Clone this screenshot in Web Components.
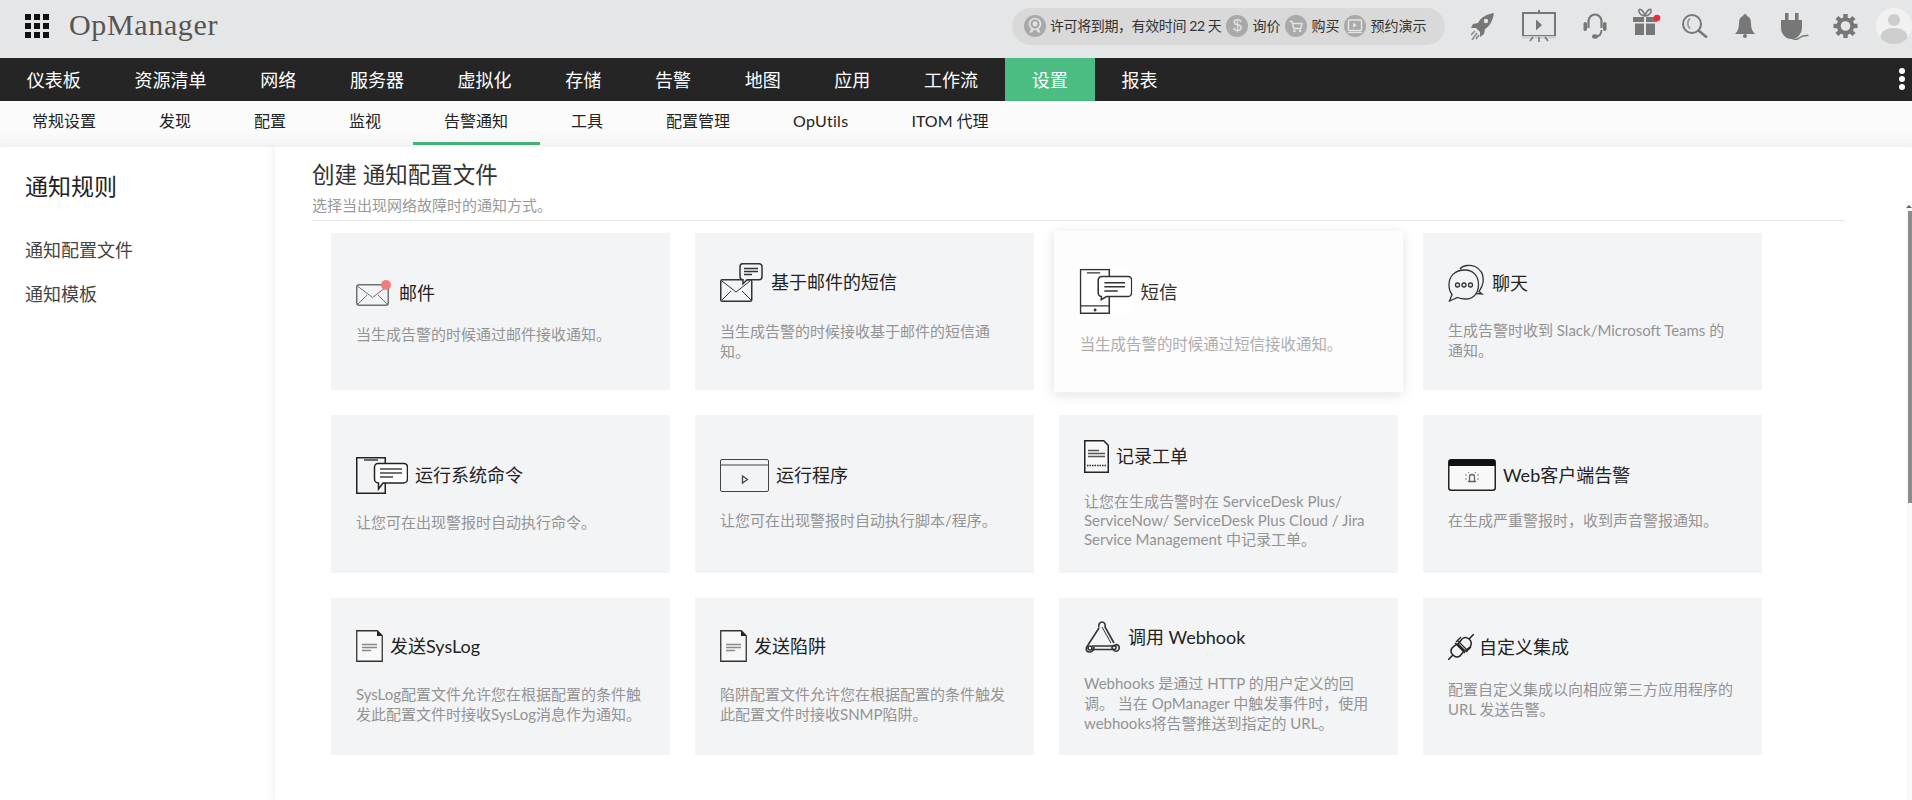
<!DOCTYPE html>
<html lang="zh">
<head>
<meta charset="utf-8">
<title>OpManager</title>
<style>
html,body{margin:0;padding:0;height:800px;overflow:hidden;background:#fff;font-family:Lato,"Noto Sans CJK SC",sans-serif}
svg{display:block;flex:none}
</style>
</head>
<body>
<om-app>
  <om-header slot="header">
    <span slot="logo">OpManager</span>
    <om-pill-item style="letter-spacing:-.4px"><svg slot="icon" viewBox="0 0 22 22" width="22" height="22"><circle cx="11" cy="11" r="11" fill="#a9a9a9"/><circle cx="11" cy="9" r="5.5" fill="none" stroke="#e4e4e4" stroke-width="1.6"/><circle cx="11" cy="9" r="2.4" fill="#e4e4e4"/><path d="M7 14l-1.5 4 3-1 1-2M15 14l1.500 4-3-1-1-2" fill="#e4e4e4"/></svg>许可将到期，有效时间 22 天</om-pill-item>
    <om-pill-item><span slot="icon" class="dollar" style="display:block;width:22px;height:22px;border-radius:50%;background:#a9a9a9;color:#e4e4e4;font:16px/22px 'Liberation Sans',sans-serif;text-align:center">$</span>询价</om-pill-item>
    <om-pill-item><svg slot="icon" viewBox="0 0 22 22" width="22" height="22"><circle cx="11" cy="11" r="11" fill="#a9a9a9"/><path d="M4.500 6.500h2.500l1.800 7h7l1.300-5H7.500" fill="none" stroke="#e4e4e4" stroke-width="1.500"/><circle cx="9.500" cy="16" r="1.300" fill="#e4e4e4"/><circle cx="15" cy="16" r="1.300" fill="#e4e4e4"/></svg>购买</om-pill-item>
    <om-pill-item><svg slot="icon" viewBox="0 0 22 22" width="22" height="22"><circle cx="11" cy="11" r="11" fill="#a9a9a9"/><rect x="4.500" y="5" width="13" height="10.500" rx="1" fill="none" stroke="#e4e4e4" stroke-width="1.500"/><path d="M9 7.800l4 2.400-4 2.400z" fill="#e4e4e4"/><path d="M4 17.500h14" stroke="#e4e4e4" stroke-width="1.300"/></svg>预约演示</om-pill-item>

    <svg slot="tools" style="margin-left:25px" viewBox="0 0 24 27" width="24" height="27" fill="#777"><path d="M24 0C17 1 11 4 8 10L3 11 1 15h5l4 4v5l4-3 1-5c5-3 8-9 9-16z"/><circle cx="16" cy="8" r="2.200" fill="#e4e5e6"/><path d="M5 18l-4 4M7 20l-5 7M9 22l-3 4" stroke="#888" stroke-width="1.500"/></svg>
    <svg slot="tools" style="margin-left:28px" viewBox="0 0 34 32" width="34" height="32"><path d="M17 0v3" stroke="#777" stroke-width="2"/><rect x="1" y="3" width="32" height="23" fill="none" stroke="#777" stroke-width="2"/><path d="M14 9.500l6 5.500-6 5.500z" fill="#777"/><rect x="0" y="26" width="34" height="2.500" fill="#cfcfcf"/><path d="M17 27v5M11 27l-3 4M23 27l3 4" stroke="#777" stroke-width="1.600"/></svg>
    <svg slot="tools" style="margin-left:27px" viewBox="0 0 24 26" width="24" height="26" fill="none" stroke="#777"><path d="M5.500 15V8a6.500 6.500 0 0 1 13 0v7" stroke-width="2.200"/><rect x="0.500" y="9" width="3.500" height="9" rx="1.700" fill="#777" stroke="none"/><rect x="20" y="9" width="3.500" height="9" rx="1.700" fill="#777" stroke="none"/><path d="M18.500 17c0 4-2.500 6.500-6.500 6.500" stroke-width="1.800"/><ellipse cx="12" cy="23.500" rx="3" ry="2.200" fill="#777" stroke="none"/></svg>
    <svg slot="tools" style="margin-left:26px;margin-bottom:10px" viewBox="0 0 28 27" width="28" height="27"><path d="M12 8C8 8 5 4 6 2s5 1 6 6c1-5 5-8 6-6s-2 6-6 6z" fill="none" stroke="#777" stroke-width="1.500"/><path d="M0 9h11v5H0zM13 9h11v5H13zM2 15.500h9V27H2zM13 15.500h9V27h-9z" fill="#777"/><circle cx="24" cy="10" r="3.300" fill="#ec2c3a"/></svg>
    <svg slot="tools" style="margin-left:21px" viewBox="0 0 26 24" width="26" height="24" fill="none"><circle cx="10" cy="10" r="9" stroke="#777" stroke-width="2"/><path d="M8 4.500C5 6.500 5 12 8 14.500" stroke="#999" stroke-width="1.800"/><path d="M16.500 16.500L25 23.500" stroke="#777" stroke-width="2.600"/></svg>
    <svg slot="tools" style="margin-left:27px" viewBox="0 0 20 24" width="20" height="24" fill="#777"><path d="M10 0C9 0 8 1 8 2 5 3 4 6 4 9c0 5-1 8-4 11h20c-3-3-4-6-4-11 0-3-1-6-4-7 0-1-1-2-2-2z"/><circle cx="10" cy="22" r="2"/></svg>
    <svg slot="tools" style="margin-left:26px" viewBox="0 0 28 27" width="28" height="27" fill="#777"><rect x="4" y="0" width="3.500" height="8"/><rect x="14" y="0" width="3.500" height="8"/><path d="M0 7h21v8a10.500 11 0 0 1-21 0z"/><path d="M11 25c3 2.500 5 2 8-.5s5-2 8.500-2" fill="none" stroke="#777" stroke-width="1.500"/></svg>
    <svg slot="tools" style="margin-left:24px" viewBox="0 0 24 24" width="25" height="24" fill="#777"><circle cx="12" cy="12" r="6.800" fill="none" stroke="#777" stroke-width="4"/><g><rect x="9.800" y="0" width="4.400" height="5"/><rect x="9.800" y="0" width="4.400" height="5" transform="rotate(45 12 12)"/><rect x="9.800" y="0" width="4.400" height="5" transform="rotate(90 12 12)"/><rect x="9.800" y="0" width="4.400" height="5" transform="rotate(135 12 12)"/><rect x="9.800" y="0" width="4.400" height="5" transform="rotate(180 12 12)"/><rect x="9.800" y="0" width="4.400" height="5" transform="rotate(225 12 12)"/><rect x="9.800" y="0" width="4.400" height="5" transform="rotate(270 12 12)"/><rect x="9.800" y="0" width="4.400" height="5" transform="rotate(315 12 12)"/></g></svg>
    <svg slot="tools" style="margin-left:18px" viewBox="0 0 36 36" width="36" height="36"><circle cx="18" cy="18" r="18" fill="#f1f1f1"/><circle cx="18" cy="12" r="6" fill="#cdcdcd"/><path d="M4.500 30c0-7 6-10 13.500-10s13.500 3 13.500 10A18 18 0 0 1 4.500 30z" fill="#cdcdcd"/></svg>
  </om-header>

  <om-nav slot="nav">
    <om-nav-item>仪表板</om-nav-item><om-nav-item>资源清单</om-nav-item><om-nav-item>网络</om-nav-item><om-nav-item>服务器</om-nav-item><om-nav-item>虚拟化</om-nav-item><om-nav-item>存储</om-nav-item><om-nav-item>告警</om-nav-item><om-nav-item>地图</om-nav-item><om-nav-item>应用</om-nav-item><om-nav-item>工作流</om-nav-item><om-nav-item active>设置</om-nav-item><om-nav-item>报表</om-nav-item>
  </om-nav>

  <om-subnav slot="subnav">
    <om-sub-item>常规设置</om-sub-item><om-sub-item>发现</om-sub-item><om-sub-item>配置</om-sub-item><om-sub-item>监视</om-sub-item><om-sub-item active>告警通知</om-sub-item><om-sub-item>工具</om-sub-item><om-sub-item>配置管理</om-sub-item><om-sub-item style="letter-spacing:.3px">OpUtils</om-sub-item><om-sub-item>ITOM 代理</om-sub-item>
  </om-subnav>

  <om-sidebar slot="sidebar">
    <span slot="title">通知规则</span>
    <om-side-link>通知配置文件</om-side-link>
    <om-side-link>通知模板</om-side-link>
  </om-sidebar>

  <om-main slot="main">
    <span slot="title">创建 通知配置文件</span>
    <span slot="sub">选择当出现网络故障时的通知方式。</span>

    <om-card style="--gap:18px">
      <svg slot="icon" viewBox="0 0 35 26" width="35" height="26" fill="none" stroke="#6d7176"><rect x=".75" y="4.750" width="31.500" height="20.500" rx="2.500" stroke-width="1.500"/><path d="M2 6.500l14.500 11L31 6.500M2 24l9-9M31 24l-9-9"/><circle cx="30" cy="5" r="5" fill="#f47b7b" stroke="none"/></svg>
      <span slot="title">邮件</span>当生成告警的时候通过邮件接收通知。
    </om-card>
    <om-card style="--gap:19px">
      <svg slot="icon" viewBox="0 0 43 39" width="43" height="39" fill="none" stroke="#333"><rect x=".75" y="16.750" width="31" height="21.500" rx="1.500" stroke-width="1.500"/><path d="M2 18l14 11L30 18M2 37l9-9M31 37l-9-9"/><path d="M22 .75h17a3 3 0 0 1 3 3v10a3 3 0 0 1-3 3H27l-4 4v-4.100a3 3 0 0 1-3-2.900v-10a3 3 0 0 1 2-3z" fill="#f3f4f6" stroke-width="1.500"/><path d="M24 5.500h14M24 8.500h14M24 11.500h8" stroke-width="1.300"/></svg>
      <span slot="title">基于邮件的短信</span>当生成告警的时候接收基于邮件的短信通知。
    </om-card>
    <om-card hover style="--gap:19px">
      <svg slot="icon" viewBox="0 0 51 44" width="51" height="44" fill="none" stroke="#333"><rect width="51" height="44" fill="#fff" stroke="none"/><rect x=".75" y=".75" width="28" height="42.500" stroke-width="1.500"/><path d="M7 4h13M1 36h28" stroke-width="1.300"/><circle cx="15" cy="40" r="1.400" fill="#333" stroke="none"/><path d="M22 7.500h25a3.500 3.500 0 0 1 3.500 3.500v12a4 4 0 0 1-4 4H26l-5 3v-3a3.500 3.500 0 0 1-3-4V11a3.500 3.500 0 0 1 4-3.500z" fill="#fff" stroke-width="1.500"/><path d="M24 13.500h20M24 17.500h20M24 21.500h13" stroke-width="1.500"/></svg>
      <span slot="title">短信</span>当生成告警的时候通过短信接收通知。
    </om-card>
    <om-card style="--gap:18px">
      <svg slot="icon" style="margin-right:-1px" viewBox="0 0 37 38" width="37" height="38" fill="none" stroke="#333" stroke-width="1.300"><path d="M12 5C15 1 22 .5 27 2.500c6 3 9 9 8 16-.5 4-2 6-4 9l3 2.500-6-.5"/><path d="M17 6C7 6 1 12 1 21c0 4 1 7 3 9.500L1.500 37l8-3.500c3 1.200 5 1.500 8 1.500 9 0 13-7 13-14.500S26 6 17 6z" fill="#f3f4f6"/><circle cx="9.500" cy="21" r="2" /><circle cx="16" cy="21" r="2"/><circle cx="22.500" cy="21" r="2"/></svg>
      <span slot="title">聊天</span>生成告警时收到 Slack/Microsoft Teams 的通知。
    </om-card>

    <om-card style="--gap:18px">
      <svg slot="icon" style="margin-right:-1px" viewBox="0 0 52 37" width="52" height="37" fill="none" stroke="#222"><rect x=".75" y=".75" width="28.500" height="35.500" stroke-width="1.500"/><path d="M8 3h14" stroke-width="1.300"/><path d="M22 6.500h26a3.500 3.500 0 0 1 3.500 3.500v12a4 4 0 0 1-4 4H27l-4.500 6v-6a4 4 0 0 1-4-4V10a3.500 3.500 0 0 1 3.500-3.500z" fill="#fff" stroke-width="1.500"/><path d="M24 12h22M24 16h22M24 20h13" stroke-width="1.500" stroke="#444"/></svg>
      <span slot="title">运行系统命令</span>让您可在出现警报时自动执行命令。
    </om-card>
    <om-card style="--gap:18px">
      <svg slot="icon" style="margin-right:-1px" viewBox="0 0 49 33" width="49" height="33" fill="none" stroke="#444"><rect x=".5" y=".5" width="48" height="32" rx="1.500" stroke-width="1"/><path d="M.5 6h48" stroke-width="1"/><path d="M22.500 17l5 3.500-5 3.500z" stroke-width="1.300"/></svg>
      <span slot="title">运行程序</span>让您可在出现警报时自动执行脚本/程序。
    </om-card>
    <om-card style="--gap:19px;--lh:19px">
      <svg slot="icon" style="margin-right:-1px" viewBox="0 0 25 33" width="25" height="33" fill="none" stroke="#222"><path d="M.75 .75h19l4.500 4.500v27H.75z" stroke-width="1.500" fill="#f8f8f8"/><path d="M4 10.500h11M4 13.500h17M4 16.500h17" stroke-width="1.500" stroke="#555"/><path d="M3 25.500h19" stroke-dasharray="1.500 1" stroke-width="1.300"/></svg>
      <span slot="title">记录工单</span>让您在生成告警时在 ServiceDesk Plus/ ServiceNow/ ServiceDesk Plus Cloud / Jira Service Management 中记录工单。
    </om-card>
    <om-card style="--gap:19px">
      <svg slot="icon" style="margin-right:-1px" viewBox="0 0 48 32" width="48" height="32" fill="none" stroke="#222"><rect x=".75" y=".75" width="46.500" height="30.500" rx="2.500" stroke-width="1.500" fill="#f8f8f8"/><path d="M1 3a2 2 0 0 1 2-2.500h42A2 2 0 0 1 47 3v4H1z" fill="#111" stroke="none"/><path d="M21.500 22v-4a2.500 2.500 0 0 1 5 0v4M20 22.500h8" stroke="#666" stroke-width="1.300"/><path d="M17 16h2M17 20h2M29 16h2M29 20h2M20 13l1 1M28 13l-1 1" stroke="#888"/></svg>
      <span slot="title">Web客户端告警</span>在生成严重警报时，收到声音警报通知。
    </om-card>

    <om-card style="--gap:22px">
      <svg slot="icon" style="margin-right:-1px" viewBox="0 0 27 32" width="27" height="32" fill="none" stroke="#333"><path d="M.75 .75h20.500l5 5v25.500H.75z" fill="#f8f8f8" stroke-width="1.300"/><path d="M21 .5l5.500 5.500H21z" fill="#222" stroke="none"/><path d="M6 14.500h15M6 17.500h15M6 20.500h9" stroke="#888" stroke-width="1.300"/></svg>
      <span slot="title">发送SysLog</span>SysLog配置文件允许您在根据配置的条件触发此配置文件时接收SysLog消息作为通知。
    </om-card>
    <om-card style="--gap:22px">
      <svg slot="icon" style="margin-right:-1px" viewBox="0 0 27 32" width="27" height="32" fill="none" stroke="#333"><path d="M.75 .75h20.500l5 5v25.500H.75z" fill="#f8f8f8" stroke-width="1.300"/><path d="M21 .5l5.500 5.500H21z" fill="#222" stroke="none"/><path d="M6 14.500h15M6 17.500h15M6 20.500h9" stroke="#888" stroke-width="1.300"/></svg>
      <span slot="title">发送陷阱</span>陷阱配置文件允许您在根据配置的条件触发此配置文件时接收SNMP陷阱。
    </om-card>
    <om-card style="--gap:20px">
      <svg slot="icon" viewBox="0 0 36 32" width="36" height="32" fill="none" stroke="#333" stroke-width="1.600"><path d="M15 6.500C14 3 16 1 18 1s4 2 3 5l9 16"/><path d="M15 7L4 24c-3 3-2 7 1 7s5-2 5-5" /><path d="M18 6l9 16" stroke-width="1"/><path d="M8 25h22c3-3 6 0 5 3s-4 3-6 .5H8" /><circle cx="6" cy="27" r="2"/><circle cx="30" cy="26.500" r="2"/></svg>
      <span slot="title">调用 Webhook</span>Webhooks 是通过 HTTP 的用户定义的回调。 当在 OpManager 中触发事件时，使用 webhooks将告警推送到指定的 URL。
    </om-card>
    <om-card style="--gap:19px">
      <svg slot="icon" style="margin-right:-3px" viewBox="0 0 26 26" width="26" height="26" fill="none" stroke="#222" stroke-width="1.500"><path d="M0 26l5-5M26 0l-5 5"/><path d="M5 21a5.500 5.500 0 0 1-1-7l5-4 7 7-4 5a5.500 5.500 0 0 1-7-1z"/><path d="M21 5a5.500 5.500 0 0 0-7 0l-4 5 7 7 5-4a5.500 5.500 0 0 0-1-8z"/><path d="M7 9l10 10M9 6l11 11M13 3L8 8M23 13l-5 5" stroke-width="1.200"/></svg>
      <span slot="title">自定义集成</span>配置自定义集成以向相应第三方应用程序的 URL 发送告警。
    </om-card>
  </om-main>
</om-app>

<script>
function define(name, html) {
  const tpl = document.createElement('template');
  tpl.innerHTML = html;
  customElements.define(name, class extends HTMLElement {
    constructor() {
      super();
      this.attachShadow({mode: 'open'}).appendChild(tpl.content.cloneNode(true));
    }
  });
}
const FONT = 'Lato,"Noto Sans CJK SC",sans-serif';

define('om-app', `<style>
:host{display:grid;grid-template-columns:275px 1fr;grid-template-rows:58px 43px 44px 655px;width:1912px;height:800px;overflow:hidden;font-family:${FONT};position:relative}
.full{grid-column:1/3;display:block}
.track{position:absolute;right:0;top:201px;bottom:0;width:6px;background:#fafafa;z-index:3}
.thumb{position:absolute;right:0;top:10px;width:4px;height:292px;background:#8c8c8c}
.arrow{position:absolute;right:0;top:4px;width:0;height:0;border:3px solid transparent;border-top:0;border-bottom:3px solid #666}
</style>
<div class="full"><slot name="header"></slot></div>
<div class="full"><slot name="nav"></slot></div>
<div class="full"><slot name="subnav"></slot></div>
<slot name="sidebar"></slot>
<slot name="main"></slot>
<div class="track"><div class="arrow"></div><div class="thumb"></div></div>`);

define('om-header', `<style>
:host{display:flex;align-items:center;height:58px;background:#e5e6e7;box-sizing:border-box;padding:0 0 6px 25px}
.grid{display:grid;grid-template-columns:repeat(3,6px);grid-auto-rows:6px;gap:3px;width:24px;height:24px}
.grid i{background:#111;display:block}
.logo{font:30px/40px "Liberation Serif",serif;color:#555;margin-left:20px;letter-spacing:.65px;flex:none;margin-top:-3px}
.pill{display:flex;align-items:center;height:37px;margin-left:auto;background:#d9d9d9;border-radius:19px;padding:0 18px 0 12px;box-sizing:border-box;gap:5px;width:433px;flex:none}
.tools{display:flex;align-items:center;flex:none}
</style>
<div class="grid"><i></i><i></i><i></i><i></i><i></i><i></i><i></i><i></i><i></i></div>
<div class="logo"><slot name="logo"></slot></div>
<div class="pill"><slot></slot></div>
<div class="tools"><slot name="tools"></slot></div>`);

define('om-pill-item', `<style>
:host{display:flex;align-items:center;gap:4px;font-size:14px;line-height:20px;color:#333;white-space:nowrap;flex:none}
</style><slot name="icon"></slot><slot></slot>`);

define('om-nav', `<style>
:host{display:flex;height:43px;background:#252525;position:relative}
.dots{position:absolute;right:7px;top:10px;display:flex;flex-direction:column;gap:2px}
.dots i{display:block;width:6px;height:6px;border-radius:50%;background:#fff}
</style><slot></slot><div class="dots"><i></i><i></i><i></i></div>`);

define('om-nav-item', `<style>
:host{display:block;padding:0 26.85px;font-size:18px;line-height:44px;height:43px;color:#fff;white-space:nowrap}
:host([active]){background:#4bbd82}
</style><slot></slot>`);

define('om-subnav', `<style>
:host{display:flex;height:44px;padding-left:.5px;box-sizing:border-box;background:linear-gradient(#fbfbfb 70%,#f4f4f4);box-shadow:0 1px 3px rgba(0,0,0,.1);position:relative;z-index:2}
</style><slot></slot>`);

define('om-sub-item', `<style>
:host{display:block;padding:0 31.5px;font-size:16px;line-height:40px;height:44px;box-sizing:border-box;color:#222;white-space:nowrap}
:host([active]){border-bottom:3px solid #46b07c}
</style><slot></slot>`);

define('om-sidebar', `<style>
:host{display:block;padding:26px 0 0 25px;background:#fff}
.t{font-size:23px;line-height:30px;color:#222;margin-bottom:27px}
</style><div class="t"><slot name="title"></slot></div><slot></slot>`);

define('om-side-link', `<style>
:host{display:block;font-size:18px;line-height:44px;color:#444}
</style><slot></slot>`);

define('om-main', `<style>
:host{display:block;background:#fff;padding:13px 0 0 37px;box-shadow:-3px 0 8px rgba(0,0,0,.05);position:relative;z-index:1}
h1{margin:0;font-size:22.5px;line-height:34px;font-weight:400;color:#333}
.s{font-size:15px;line-height:20px;color:#999;margin-top:3px}
hr{border:0;height:1px;background:#e8e8e8;margin:5px 67px 12px 0}
.g{display:grid;grid-template-columns:repeat(4,339px);grid-template-rows:157px 158px 157px;gap:25px;margin-left:19px}
</style><h1><slot name="title"></slot></h1><div class="s"><slot name="sub"></slot></div><hr><div class="g"><slot></slot></div>`);

define('om-card', `<style>
:host{display:flex;flex-direction:column;justify-content:center;padding:0 25px;box-sizing:border-box;background:#f3f4f6}
:host([hover]){background:#fdfdfd;transform:scale(1.03);box-shadow:0 3px 12px rgba(0,0,0,.13);position:relative;z-index:2}
.r{display:flex;align-items:center;gap:8px;margin-bottom:var(--gap,20px)}
.t{font-size:18px;line-height:26px;color:#222;white-space:nowrap}
.d{font-size:15px;line-height:var(--lh,20px);color:#939393}
:host([hover]) .t{color:#333}
:host([hover]) .d{color:#adadad}
</style><div class="r"><slot name="icon"></slot><div class="t"><slot name="title"></slot></div></div><div class="d"><slot></slot></div>`);
</script>
</body>
</html>
